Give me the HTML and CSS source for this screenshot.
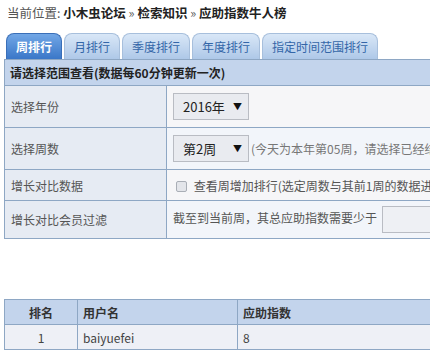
FILE: index.html
```html
<!DOCTYPE html>
<html lang="zh-CN">
<head>
  <meta charset="UTF-8">
  <title>应助指数牛人榜</title>
  <link rel="stylesheet" href="styles.css">
</head>
<body>
  <div class="crumb">
    当前位置: <a href="#">小木虫论坛</a> » <a href="#">检索知识</a> » <a href="#">应助指数牛人榜</a>
  </div>

  <ul class="tabs">
    <li class="active"><a href="#">周排行</a></li>
    <li><a href="#">月排行</a></li>
    <li><a href="#">季度排行</a></li>
    <li><a href="#">年度排行</a></li>
    <li><a href="#">指定时间范围排行</a></li>
  </ul>

  <table class="form-table">
    <tr>
      <th colspan="2">请选择范围查看(数据每60分钟更新一次)</th>
    </tr>
    <tr class="tall">
      <td class="label">选择年份</td>
      <td class="value"><span class="select">2016年<i>▼</i></span></td>
    </tr>
    <tr class="tall">
      <td class="label">选择周数</td>
      <td class="value alt"><span class="select">第2周<i>▼</i></span><span class="note">(今天为本年第05周，请选择已经结束的周数查看)</span></td>
    </tr>
    <tr>
      <td class="label">增长对比数据</td>
      <td class="value"><span class="check"></span> 查看周增加排行(选定周数与其前1周的数据进行对比)</td>
    </tr>
    <tr class="mid">
      <td class="label">增长对比会员过滤</td>
      <td class="value alt">截至到当前周，其总应助指数需要少于 <span class="field"></span></td>
    </tr>
  </table>

  <table class="rank-table">
    <tr>
      <th class="num">排名</th>
      <th class="user">用户名</th>
      <th>应助指数</th>
    </tr>
    <tr>
      <td class="num">1</td>
      <td>baiyuefei</td>
      <td>8</td>
    </tr>
  </table>
</body>
</html>
```

FILE: styles.css
```css
/* Reset */
* {
  margin: 0;
  padding: 0;
  box-sizing: border-box;
}

html, body {
  overflow: hidden;
}

body {
  font-family: "Noto Sans CJK SC", "Liberation Sans", sans-serif;
  font-size: 12px;
  color: #333;
  background: #fff;
  padding: 0 0 0 4px;
  width: 760px;
}

a {
  color: #222;
  text-decoration: none;
}

/* Breadcrumb */
.crumb {
  padding: 3px 0 0 3px;
  height: 36px;
  line-height: 20px;
  font-size: 12.5px;
  color: #555;
}

.crumb a {
  font-weight: bold;
}

/* Tabs */
.tabs {
  list-style: none;
  display: flex;
  gap: 2px;
  padding-left: 2px;
  height: 26px;
  margin-top: -3px;
  align-items: flex-end;
}

.tabs li {
  height: 26px;
  border-radius: 8px 8px 0 0;
  background: linear-gradient(#d9e7f7, #aec8e8);
  border: 1px solid #a7bfdc;
  border-bottom: none;
}

.tabs li a {
  display: block;
  padding: 0 9px;
  line-height: 25px;
  color: #3366a8;
}

.tabs li.active {
  background: linear-gradient(#72a7e6, #3a77c8);
  border-color: #3a6fb8;
}

.tabs li.active a {
  color: #fff;
  font-weight: bold;
}

/* Search form table */
.form-table {
  border-collapse: collapse;
  width: 720px;
  border: 1px solid #8ea7c4;
}

.form-table th {
  text-align: left;
  font-weight: bold;
  height: 26px;
  padding: 0 5px;
  background: #c3d4ec;
  color: #222;
  border-bottom: 1px solid #8ea7c4;
}

.form-table td {
  height: 31px;
  padding: 0 6px;
  border-top: 1px solid #8ea7c4;
  color: #555;
}

.form-table tr.tall td {
  height: 42px;
}

.form-table tr.mid td {
  height: 38px;
}

.form-table .label {
  width: 162px;
  background: #e6ebf3;
  border-right: 1px solid #8ea7c4;
}

.form-table .value {
  background: #f6f6f8;
  color: #555;
}

.form-table .value.alt {
  background: #f2f5fa;
}

.select {
  display: inline-flex;
  align-items: center;
  justify-content: space-between;
  width: 76px;
  height: 27px;
  padding: 0 6px 0 9px;
  background: #e9ebf0;
  border: 1px solid #b9bcc3;
  color: #222;
  font-size: 13px;
  vertical-align: middle;
}

.select i {
  font-style: normal;
  font-size: 9px;
  color: #111;
}

.note {
  color: #777;
  margin-left: 2px;
  vertical-align: middle;
}

.check {
  display: inline-block;
  width: 11px;
  height: 11px;
  margin: 0 4px 0 3px;
  border: 1px solid #a9aeb6;
  border-radius: 2px;
  background: #e3e5ea;
  vertical-align: -1px;
}

.field {
  display: inline-block;
  width: 120px;
  height: 27px;
  border: 1px solid #b9bcc3;
  background: #eef0f4;
  vertical-align: middle;
  margin-left: 2px;
}

/* Ranking table */
.rank-table {
  margin-top: 60px;
  border-collapse: collapse;
  width: 720px;
  border: 1px solid #8ea7c4;
}

.rank-table th {
  height: 25px;
  background: #c3d4ec;
  text-align: left;
  padding: 0 5px;
  font-weight: bold;
  color: #333;
  border-right: 1px solid #8ea7c4;
}

.rank-table td {
  height: 25px;
  padding: 0 5px;
  background: #eef0f6;
  border-top: 1px solid #8ea7c4;
  border-right: 1px solid #8ea7c4;
  color: #444;
}

.rank-table .num {
  width: 73px;
  text-align: center;
}

.rank-table .user {
  width: 160px;
}
```
